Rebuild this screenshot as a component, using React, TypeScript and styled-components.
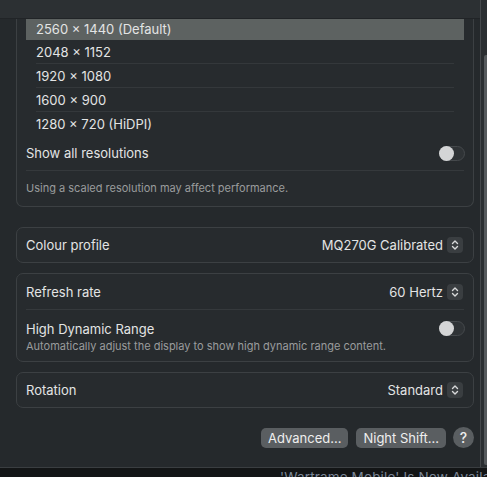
import React from "react";
import styled, { createGlobalStyle } from "styled-components";

const Global = createGlobalStyle`
  html, body { margin: 0; padding: 0; background: #151718; }
  body { font-family: Inter, "Noto Sans", "Liberation Sans", sans-serif; -webkit-font-smoothing: antialiased; }
  * { box-sizing: border-box; }
`;

const Screen = styled.div`
  width: 487px;
  height: 477px;
  overflow: hidden;
  display: flex;
  flex-direction: column;
  background: #151718;
`;

const Top = styled.div`
  display: flex;
  height: 467px;
  flex-shrink: 0;
`;

const Window = styled.div`
  width: 481px;
  height: 100%;
  background: #25292c;
  border-right: 1px solid #44484b;
  display: flex;
  flex-direction: column;
  overflow: hidden;
`;

const SideStrip = styled.div`
  flex: 1;
  background: #2a2e31;
  padding: 55px 0 2px 3px;
  display: flex;
`;

const Thumb = styled.div`
  flex: 1;
  background: #55595c;
  border-radius: 2px 0 0 2px;
`;

const Header = styled.div`
  height: 19px;
  flex-shrink: 0;
  background: #2c3033;
  border-bottom: 1px solid #212427;
`;

const Content = styled.div`
  flex: 1;
  display: flex;
  flex-direction: column;
  padding: 0 6px 0 16px;
`;

const Card = styled.div<{ $scrolled?: boolean }>`
  border: 1px solid #3c4043;
  border-top: ${(p) => (p.$scrolled ? "none" : "1px solid #3c4043")};
  border-radius: ${(p) => (p.$scrolled ? "0 0 7px 7px" : "7px")};
  background: #272b2e;
  padding: 0 9px;
  display: flex;
  flex-direction: column;
`;

const Gap = styled.div<{ $h: number }>`
  height: ${(p) => p.$h}px;
  flex-shrink: 0;
`;

const ListRow = styled.div<{ $selected?: boolean; $sep?: boolean; $h?: number }>`
  height: ${(p) => p.$h ?? 24}px;
  display: flex;
  align-items: center;
  padding: ${(p) => (p.$selected ? "0 10px 1px" : "0 10px")};
  background: ${(p) => (p.$selected ? "#5d6261" : "transparent")};
  color: #e3e4e4;
  font-size: 13px;
  position: relative;
  &::after {
    content: "";
    display: ${(p) => (p.$sep ? "block" : "none")};
    position: absolute;
    left: 10px;
    right: 10px;
    bottom: 0;
    height: 1px;
    background: #34383b;
  }
`;

const Row = styled.div<{ $h: number; $sep?: boolean }>`
  height: ${(p) => p.$h}px;
  display: flex;
  align-items: center;
  justify-content: space-between;
  color: #e3e4e4;
  font-size: 13px;
  border-bottom: ${(p) => (p.$sep ? "1px solid #35393c" : "none")};
`;

const Note = styled.div`
  height: 35px;
  display: flex;
  align-items: center;
  padding-bottom: 1px;
  color: #9a9c9d;
  font-size: 11px;
`;

const TwoLine = styled.div`
  height: 51px;
  display: flex;
  align-items: flex-start;
  justify-content: space-between;
  padding-top: 11px;
`;

const Stack = styled.div`
  display: flex;
  flex-direction: column;
  gap: 2px;
`;

const Title = styled.div`
  color: #e3e4e4;
  font-size: 13px;
`;

const Sub = styled.div`
  color: #9a9c9d;
  font-size: 11px;
`;

const Toggle = styled.div`
  width: 26px;
  height: 15px;
  border-radius: 8px;
  background: #2f3336;
  border: 1px solid #45494c;
  position: relative;
  flex-shrink: 0;
  margin-right: -1px;
  &::before {
    content: "";
    position: absolute;
    left: -1px;
    top: -1px;
    width: 15px;
    height: 15px;
    border-radius: 50%;
    background: #d4d5d6;
  }
`;

const Popup = styled.div`
  display: flex;
  align-items: center;
  gap: 4px;
  color: #e3e4e4;
  font-size: 13px;
  padding-right: 1px;
`;

const StepBox = styled.div`
  width: 16px;
  height: 16px;
  border-radius: 4px;
  background: #3a3e41;
  display: flex;
  align-items: center;
  justify-content: center;
`;

const Buttons = styled.div`
  display: flex;
  justify-content: flex-end;
  align-items: center;
  gap: 8px;
  margin-top: 19px;
`;

const Button = styled.div`
  height: 20px;
  padding: 0 7px;
  border-radius: 5px;
  background: #5a5e61;
  color: #eeeeee;
  font-size: 13px;
  display: flex;
  align-items: center;
`;

const Help = styled.div`
  width: 21px;
  height: 21px;
  border-radius: 50%;
  background: #5a5e61;
  color: #eeeeee;
  font-size: 14px;
  font-weight: 500;
  display: flex;
  align-items: center;
  justify-content: center;
  margin-left: -1px;
`;

const Behind = styled.div`
  flex: 1;
  border-top: 1px solid #3a3e41;
  background: #131516;
  overflow: hidden;
  position: relative;
`;

const BehindText = styled.div`
  position: absolute;
  left: 280px;
  top: 1px;
  white-space: nowrap;
  color: #7b8697;
  font-size: 13.5px;
  line-height: 16px;
  letter-spacing: 0.15px;
`;

const Stepper = () => (
  <StepBox>
    <svg width="10" height="12" viewBox="0 0 10 12" fill="none">
      <path d="M2.5 4.5 L5 2 L7.5 4.5" stroke="#d8d9da" strokeWidth="1.4" strokeLinecap="round" strokeLinejoin="round" />
      <path d="M2.5 7.5 L5 10 L7.5 7.5" stroke="#d8d9da" strokeWidth="1.4" strokeLinecap="round" strokeLinejoin="round" />
    </svg>
  </StepBox>
);

const resolutions = [
  "2048 × 1152",
  "1920 × 1080",
  "1600 × 900",
  "1280 × 720 (HiDPI)",
];

export default function App() {
  return (
    <Screen>
      <Global />
      <Top>
        <Window>
          <Header />
          <Content>
            <Card $scrolled>
              <ListRow $selected $h={21}>2560 × 1440 (Default)</ListRow>
              {resolutions.map((r, i) => (
                <ListRow key={r} $sep={i < resolutions.length - 1}>
                  {r}
                </ListRow>
              ))}
              <Row $h={35} $sep>
                <span>Show all resolutions</span>
                <Toggle />
              </Row>
              <Note>Using a scaled resolution may affect performance.</Note>
            </Card>
            <Gap $h={20} />
            <Card>
              <Row $h={34}>
                <span>Colour profile</span>
                <Popup>
                  MQ270G Calibrated
                  <Stepper />
                </Popup>
              </Row>
            </Card>
            <Gap $h={10} />
            <Card>
              <Row $h={36} $sep>
                <span>Refresh rate</span>
                <Popup>
                  60 Hertz
                  <Stepper />
                </Popup>
              </Row>
              <TwoLine>
                <Stack>
                  <Title>High Dynamic Range</Title>
                  <Sub>Automatically adjust the display to show high dynamic range content.</Sub>
                </Stack>
                <Toggle />
              </TwoLine>
            </Card>
            <Gap $h={10} />
            <Card>
              <Row $h={34}>
                <span>Rotation</span>
                <Popup>
                  Standard
                  <Stepper />
                </Popup>
              </Row>
            </Card>
            <Buttons>
              <Button>Advanced...</Button>
              <Button>Night Shift...</Button>
              <Help>?</Help>
            </Buttons>
          </Content>
        </Window>
        <SideStrip>
          <Thumb />
        </SideStrip>
      </Top>
      <Behind>
        <BehindText>'Wartrame Mobile' Is Now Available</BehindText>
      </Behind>
    </Screen>
  );
}
